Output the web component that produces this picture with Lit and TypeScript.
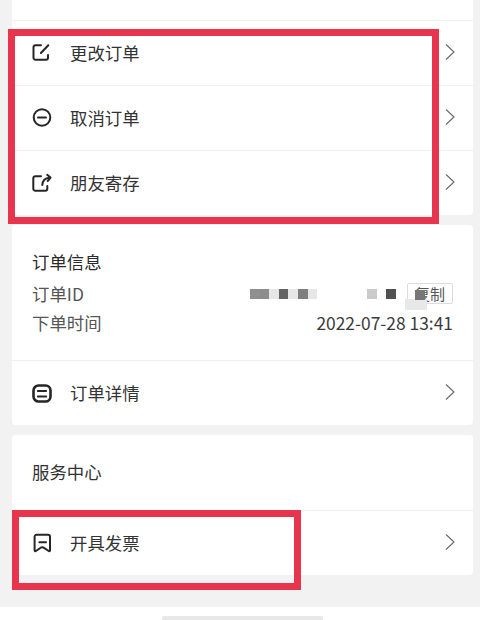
import { LitElement, html, css, svg } from "lit";
import { customElement } from "lit/decorators.js";

const ICONS = {
  edit: svg`<path d="M9 2.300H3.500a2 2 0 0 0-2 2v10.400a2 2 0 0 0 2 2h10.500a2 2 0 0 0 2-2v-2.700"/><path d="M8.900 10 16.300 2.200"/>`,
  minus: svg`<circle cx="10" cy="9.500" r="8.300"/><path d="M6 9.500h8"/>`,
  share: svg`<path d="M9 3.200H3.300a2 2 0 0 0-2 2v10.500a2 2 0 0 0 2 2h10a2 2 0 0 0 2-2v-2.700"/><path d="M10.300 12c.3-4.300 2.700-7 7.200-7.300"/><path d="M15.200 1.800 18.500 4.600l-2.800 3.400" />`,
  doc: svg`<rect x="1.500" y="2.500" width="17" height="16" rx="5" stroke-width="2.600"/><path d="M5.800 8h8.400M5.800 13.500h8.400" stroke-width="1.900"/>`,
  mark: svg`<path d="M4.300 1.800h11.700a2 2 0 0 1 2 2v13.600a.8.800 0 0 1-1.300.600l-4.700-3.200a3 3 0 0 0-3.400 0l-4.700 3.200a.8.800 0 0 1-1.300-.600V3.800a2 2 0 0 1 2-2Z"/><path d="M7.300 9.200h6.700"/>`,
};

const MOSAIC_A = ["#909090", "#8c8c8c", "#e6e6e6", "#636363", "#e6e6e6", "#7e7e7e", "#e6e6e6"];
const MOSAIC_B = ["#fff", "#cbcbcb", "#fff", "#505050"];

@customElement("app-root")
export class AppRoot extends LitElement {
  static styles = css`
    :host {
      display: flex;
      flex-direction: column;
      position: relative;
      width: 480px;
      height: 620px;
      overflow: hidden;
      background: #f2f2f2;
      font-family: "Noto Sans CJK SC", "Noto Sans", sans-serif;
      color: #333;
    }
    .content {
      flex: 1;
      display: flex;
      flex-direction: column;
      gap: 10px;
      padding: 0 7px 0 12px;
    }
    .card {
      background: #fff;
      border-radius: 0 0 4px 4px;
      display: flex;
      flex-direction: column;
    }
    .rounded {
      border-radius: 4px;
    }
    .stub {
      height: 20px;
    }
    .row {
      height: 65px;
      box-sizing: border-box;
      border-top: 1px solid #efefef;
      display: flex;
      align-items: center;
      padding: 0 18px 2px 20px;
      font-size: 17.400px;
    }
    .row .icon {
      width: 20px;
      height: 18px;
      flex: none;
      overflow: visible;
      fill: none;
      stroke: #262626;
      stroke-width: 2;
      stroke-linecap: round;
      stroke-linejoin: round;
    }
    .row .label {
      flex: 1;
      margin-left: 18px;
      color: #333;
    }
    .chev {
      width: 10px;
      height: 16px;
      flex: none;
      fill: none;
      stroke: #666;
      stroke-width: 1.100;
    }
    .info {
      height: 135px;
      box-sizing: border-box;
      padding: 22px 20px 0 20px;
      font-size: 17.400px;
      line-height: 29px;
      color: #555;
    }
    .title {
      color: #2a2a2a;
      margin-bottom: 3px;
    }
    .line {
      display: flex;
      align-items: center;
      justify-content: space-between;
    }
    .date {
      color: #3a3a3a;
    }
    .id {
      display: flex;
      align-items: center;
    }
    .mosaic {
      display: flex;
    }
    .mosaic i {
      width: 9.600px;
      height: 10px;
    }
    .mosaic.second {
      margin-left: 40.400px;
    }
    .copy {
      position: relative;
      width: 46px;
      height: 21px;
      margin-left: 11px;
      box-sizing: border-box;
      border: 1px solid #dcdcdc;
      border-radius: 2px;
      font-size: 15px;
      line-height: 19px;
      text-align: center;
      color: #555;
    }
    .smudge {
      position: absolute;
      left: -3px;
      top: 15px;
      width: 22px;
      height: 11px;
      background: #e8e8e8;
    }
    .smudge-dot {
      position: absolute;
      left: 7px;
      top: 6px;
      width: 10px;
      height: 10px;
      background: #777;
    }
    .section {
      height: 75px;
      box-sizing: border-box;
      padding: 24px 20px 0;
      font-size: 17.400px;
      line-height: 26px;
    }
    .foot {
      flex: none;
      height: 13px;
      background: #fff;
      position: relative;
    }
    .bar {
      position: absolute;
      left: 162px;
      top: 9px;
      width: 161px;
      height: 4px;
      border-radius: 2px 2px 0 0;
      background: #e8e8e8;
    }
    .mark {
      position: absolute;
      box-sizing: border-box;
      border: 7px solid #e6354c;
    }
    .mark.a {
      left: 8px;
      top: 29px;
      width: 431px;
      height: 195px;
    }
    .mark.b {
      left: 12px;
      top: 510px;
      width: 289px;
      height: 80px;
    }
  `;

  private row(icon: keyof typeof ICONS, label: string) {
    return html`<div class="row">
      <svg class="icon" viewBox="0 0 20 18">${ICONS[icon]}</svg>
      <span class="label">${label}</span>
      <svg class="chev" viewBox="0 0 10 16"><path d="M1 .5 9 8 1 15.500" /></svg>
    </div>`;
  }

  private mosaic(colors: string[], cls = "") {
    return html`<span class="mosaic ${cls}">
      ${colors.map((c) => html`<i style="background:${c}"></i>`)}
    </span>`;
  }

  render() {
    return html`
      <div class="content">
        <div class="card">
          <div class="stub"></div>
          ${this.row("edit", "更改订单")} ${this.row("minus", "取消订单")}
          ${this.row("share", "朋友寄存")}
        </div>
        <div class="card rounded">
          <div class="info">
            <div class="title">订单信息</div>
            <div class="line">
              <span>订单ID</span>
              <span class="id">
                ${this.mosaic(MOSAIC_A)} ${this.mosaic(MOSAIC_B, "second")}
                <span class="copy">复制<span class="smudge"></span><span class="smudge-dot"></span></span>
              </span>
            </div>
            <div class="line"><span>下单时间</span><span class="date">2022-07-28 13:41</span></div>
          </div>
          ${this.row("doc", "订单详情")}
        </div>
        <div class="card rounded">
          <div class="section">服务中心</div>
          ${this.row("mark", "开具发票")}
        </div>
      </div>
      <div class="foot"><div class="bar"></div></div>
      <div class="mark a"></div>
      <div class="mark b"></div>
    `;
  }
}
